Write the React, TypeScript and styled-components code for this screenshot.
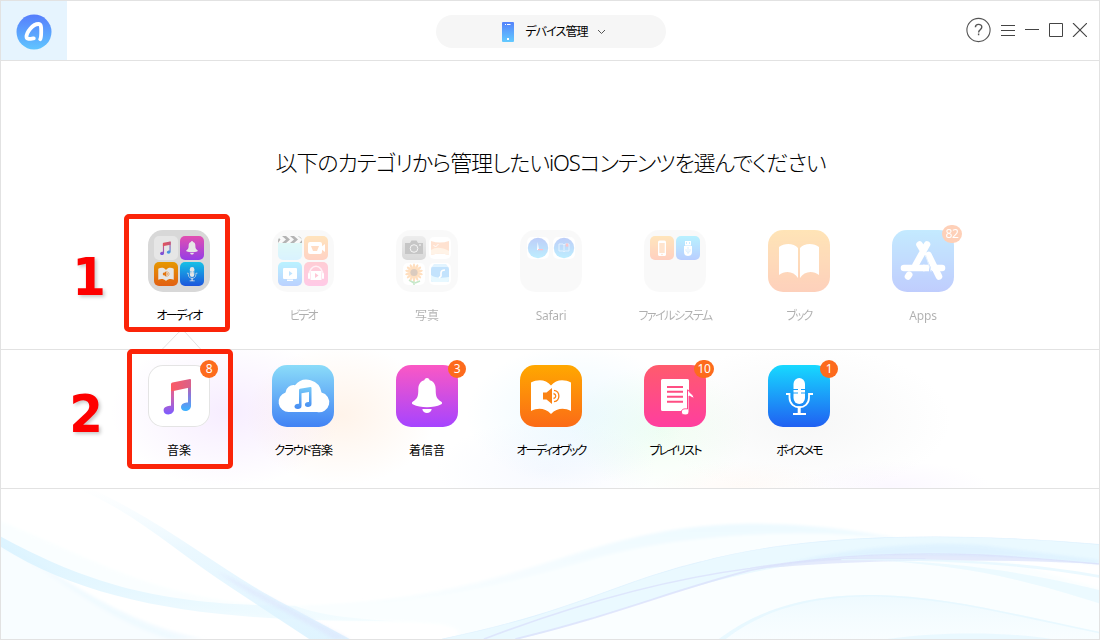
import React from "react";
import styled, { createGlobalStyle } from "styled-components";

const Global = createGlobalStyle`
  * { box-sizing: border-box; }
  body { margin: 0; background: #fff; font-family: "Noto Sans", "Noto Sans CJK JP", sans-serif; }
  svg { display: block; }
`;

const Window = styled.main`
  position: relative;
  width: 1100px;
  height: 640px;
  border: 1px solid #e2e2e2;
  background: #fff;
  display: flex;
  flex-direction: column;
  overflow: hidden;
`;

const Header = styled.header`
  height: 60px;
  flex: none;
  display: grid;
  grid-template-columns: 1fr 230px 1fr;
  border-bottom: 1px solid #e2e2e2;
`;

const LogoBox = styled.div`
  width: 66px;
  height: 59px;
  background: #e6f4fe;
  display: flex;
  align-items: center;
  justify-content: center;
  padding-top: 3px;
`;

const DevicePill = styled.button`
  width: 230px;
  height: 33px;
  margin: 14px 0 0 1px;
  padding: 0 0 0 66px;
  border: 0;
  border-radius: 17px;
  background: #f6f6f6;
  display: flex;
  align-items: center;
  font-family: inherit;
`;

const DeviceName = styled.span`
  width: 63px;
  margin: 0 9px 0 11px;
  font-size: 12px;
  line-height: 16px;
  letter-spacing: -0.85px;
  font-feature-settings: "palt";
  white-space: nowrap;
  color: #000;
`;

const Controls = styled.nav`
  display: flex;
  align-items: center;
  justify-content: flex-end;
  padding: 0 12px 1px 0;
  gap: 9px;
`;

const Upper = styled.section`
  height: 289px;
  flex: none;
  display: flex;
  flex-direction: column;
  border-bottom: 1px solid #e2e2e2;
`;

const Title = styled.h1`
  margin: 83px 0 0 1px;
  height: 36px;
  font-size: 22px;
  line-height: 36px;
  font-weight: 300;
  letter-spacing: -1.1px;
  font-feature-settings: "palt";
  text-align: center;
  white-space: nowrap;
  color: #000;
`;

const Row = styled.div<{ $top: number }>`
  display: flex;
  padding: ${(p) => p.$top}px 0 0 116px;
`;

const Item = styled.div<{ $faded?: boolean }>`
  width: 124px;
  flex: none;
  display: flex;
  flex-direction: column;
  align-items: center;
  opacity: ${(p) => (p.$faded ? 0.31 : 1)};
`;

const Holder = styled.div`
  position: relative;
  width: 62px;
  height: 62px;
`;

const Tile = styled.div<{ $from: string; $to: string; $outline?: boolean }>`
  width: 62px;
  height: 62px;
  border-radius: 15px;
  background: linear-gradient(${(p) => p.$from}, ${(p) => p.$to});
  box-shadow: ${(p) => (p.$outline ? "inset 0 0 0 1px #e4e4e4" : "none")};
`;

const Folder = styled.div<{ $active?: boolean }>`
  width: 62px;
  height: 62px;
  padding: 6px;
  border-radius: 15px;
  background: ${(p) => (p.$active ? "#f0f0f0" : "#eeeeee")};
  filter: ${(p) => (p.$active ? "brightness(0.9)" : "none")};
  display: grid;
  grid-template-columns: 24px 24px;
  grid-auto-rows: 24px;
  gap: 2px;
`;

const Mini = styled.div<{ $from: string; $to: string; $inset?: boolean }>`
  width: ${(p) => (p.$inset ? 22 : 24)}px;
  height: ${(p) => (p.$inset ? 22 : 24)}px;
  margin: ${(p) => (p.$inset ? 1 : 0)}px;
  border-radius: 5px;
  overflow: hidden;
  background: linear-gradient(${(p) => p.$from}, ${(p) => p.$to});
`;

const Badge = styled.span<{ $wide?: boolean }>`
  position: absolute;
  top: -5px;
  left: ${(p) => (p.$wide ? 50 : 52)}px;
  width: ${(p) => (p.$wide ? 20 : 18)}px;
  height: 18px;
  border-radius: 9px;
  background: #fd6b1d;
  color: #fff;
  font-size: 12px;
  line-height: 17px;
  letter-spacing: -0.3px;
  text-align: center;
`;

const Label = styled.span<{ $track?: number }>`
  margin-top: 15px;
  height: 18px;
  font-size: 12px;
  line-height: 18px;
  letter-spacing: ${(p) => p.$track ?? 0}px;
  font-feature-settings: "palt";
  white-space: nowrap;
  color: #000;
`;

const Detail = styled.section`
  position: relative;
  height: 139px;
  flex: none;
  border-bottom: 1px solid #e2e2e2;
  background:
    radial-gradient(ellipse 115px 75px at 225px 62px, rgba(226, 190, 255, 0.28), transparent),
    radial-gradient(ellipse 95px 70px at 340px 65px, rgba(255, 214, 180, 0.28), transparent),
    radial-gradient(ellipse 110px 70px at 575px 65px, rgba(178, 230, 255, 0.24), transparent),
    radial-gradient(ellipse 110px 50px at 545px 120px, rgba(200, 215, 255, 0.15), transparent),
    radial-gradient(ellipse 90px 65px at 660px 80px, rgba(200, 255, 205, 0.24), transparent),
    radial-gradient(ellipse 150px 75px at 800px 70px, rgba(200, 205, 205, 0.16), transparent),
    radial-gradient(ellipse 90px 25px at 740px 136px, rgba(255, 225, 205, 0.15), transparent),
    radial-gradient(ellipse 100px 25px at 890px 136px, rgba(230, 205, 255, 0.14), transparent),
    #fff;
`;

const Pointer = styled.svg`
  position: absolute;
  left: 160px;
  top: -20px;
`;

const Footer = styled.footer`
  flex: 1;
  min-height: 0;
`;

const Frame = styled.div<{ $x: number; $y: number; $w: number; $h: number }>`
  position: absolute;
  left: ${(p) => p.$x}px;
  top: ${(p) => p.$y}px;
  width: ${(p) => p.$w}px;
  height: ${(p) => p.$h}px;
  border: 5.5px solid #fb2409;
  border-radius: 5px;
`;

const Step = styled.span<{ $x: number; $y: number }>`
  position: absolute;
  left: ${(p) => p.$x}px;
  top: ${(p) => p.$y}px;
  font-family: "DejaVu Sans", sans-serif;
  font-size: 52px;
  line-height: 60px;
  font-weight: 700;
  color: #fe0000;
  transform: scaleX(0.93);
  -webkit-text-stroke: 2px #fff;
  paint-order: stroke fill;
  text-shadow: 2px 2px 4px rgba(0, 0, 0, 0.22);
`;

const Glyph = ({ size = 62, children }: { size?: number; children: React.ReactNode }) => (
  <svg width={size} height={size} viewBox="0 0 62 62" fill="#fff">
    {children}
  </svg>
);

const Defs = () => (
  <defs>
    <linearGradient id="noteL" x1="0" y1="16" x2="0" y2="49" gradientUnits="userSpaceOnUse">
      <stop offset="0" stopColor="#fb5a63" />
      <stop offset=".45" stopColor="#d261a8" />
      <stop offset="1" stopColor="#7d5cff" />
    </linearGradient>
    <linearGradient id="noteR" x1="0" y1="14" x2="0" y2="45" gradientUnits="userSpaceOnUse">
      <stop offset="0" stopColor="#f05c72" />
      <stop offset=".5" stopColor="#8c74d8" />
      <stop offset="1" stopColor="#3fb0ff" />
    </linearGradient>
    <linearGradient id="beam" x1="23" y1="0" x2="43" y2="0" gradientUnits="userSpaceOnUse">
      <stop offset="0" stopColor="#fc5a64" />
      <stop offset="1" stopColor="#d9608a" />
    </linearGradient>
    <linearGradient id="cloudNote" x1="0" y1="20" x2="0" y2="45" gradientUnits="userSpaceOnUse">
      <stop offset="0" stopColor="#7cd0f8" />
      <stop offset="1" stopColor="#4388f2" />
    </linearGradient>
  </defs>
);

const MusicArt = () => (
  <>
    <Defs />
    <path fill="url(#noteR)" d="M40 15h3v26c0 3-3 5-5.600 5-2.500 0-4.400-1.500-4.400-3.800 0-3.800 4-4.800 7-4.800z" />
    <path fill="url(#noteL)" d="M23 19h3v25.500c0 3-3 4.900-5.600 4.900-2.700 0-4.800-1.600-4.800-4 0-3.800 4.400-4.600 7.400-4.600z" />
    <path fill="url(#beam)" d="M24.500 17.500 42 14q1-.1 1 1v7.300L25.500 26H23v-6.700q0-1.500 1.500-1.800z" />
  </>
);
const BellArt = () => (
  <path d="M31 13c1.600 0 2.500 1 2.700 2.300 4.400 1.200 6 4.800 6 9.300 0 6.500.7 9.200 5.300 12 1.600 1 1.400 2.400-.2 3C38 43.200 24 43.200 17.200 39.600c-1.600-.6-1.800-2-.2-3 4.600-2.800 5.300-5.500 5.300-12 0-4.500 1.600-8.100 6-9.300C28.500 14 29.400 13 31 13zM26.300 44h9.400c-.6 5.300-8.800 5.300-9.400 0z" />
);
const AudioBookArt = ({ accent = "#fb8314" }: { accent?: string }) => (
  <>
    <path d="M11 17.500C17.500 14 26 14 31 20.500 36 14 44.500 14 51 17.500V46c-7-3.500-14-3-20 3-6-6-13-6.500-20-3z" />
    <path fill={accent} d="M23 27.500h3.500L32 23v16l-5.500-4.500H23z" />
    <path fill="none" stroke={accent} strokeWidth="1.300" d="M33.500 28.500c3 .8 3 4.200 0 5M34 25.300c6.500 1 6.500 10.400 0 11.400" />
  </>
);
const MicArt = () => (
  <>
    <path d="M25.500 19a5.700 5.900 0 0 1 11.500 0v14a5.700 5.900 0 0 1-11.500 0z" />
    <path fill="none" stroke="#1b9ffb" d="M25 24.500h5m3 0h5M25 28h5m3 0h5" />
    <path fill="none" stroke="#fff" strokeWidth="1.800" d="M18 29h3.500v3.500c0 13 19.500 13 19.500 0V29h4" />
    <path d="M29.700 41.500h3V48H38v2H25v-2h4.700z" />
  </>
);
const CloudArt = () => (
  <>
    <Defs />
    <path d="M17 47a10 10 0 0 1-3.500-19.500A8 8 0 0 1 23 20.200 15 15 0 0 1 49.500 27.500 10 10 0 0 1 45 47z" />
    <path fill="url(#cloudNote)" d="M27 25q0-1 1-1.200L38.500 22q1-.1 1 1v16c0 2.200-1.700 3-3.500 3-4.500 0-4-5.500 1-5V27l-7.500 1.300V41c0 2.200-1.800 3-3.600 3-5 0-4.400-5.700 1.100-5.200z" />
  </>
);
const PlaylistArt = () => (
  <>
    <path d="M18.500 14h25q1.500 0 1.500 1.500V26l-1.500-2v20L39 46H18.500Q17 46 17 44.500v-29Q17 14 18.500 14z" />
    <path fill="none" stroke="#ff4d83" strokeWidth="1.900" d="M23 22h16M23 26.700h16M23 31.700h16M23 36.700h16" />
    <path stroke="#ff468c" strokeWidth="1" d="M43.500 25q1 0 1.500 1c1 3 5 3 5 7.500l-5-2.500v16c0 4-7.700 4-7.700 0 0-3 3.700-3.600 6.200-3z" />
  </>
);
const BookArt = () => (
  <path d="M11 17c5-4 15-4 19 1v30c-4-7-13-8-19-3zM51 17c-5-4-15-4-19 1v30c4-7 13-8 19-3z" />
);
const AppsArt = () => (
  <g fill="none" stroke="#fff" strokeWidth="6.600" strokeLinecap="round">
    <path d="M35 14.500 23.500 35M27.500 14.500l3 5M36.500 25 47 46.500M16 46.500l1.200-1.800" />
    <path d="M12 38h20M42 38h8" />
    <path d="M31 38h6" strokeLinecap="butt" />
    <path stroke="#acd3fd" strokeWidth="1" d="M33.700 25.500 39 41.300" />
  </g>
);

const VideoFolder = () => (
  <Folder>
    <Mini $from="#a5f8df" $to="#88d8ff">
      <svg width="24" height="24"><path fill="#eee" d="M0 0h24v7H0z" /><path fill="#111" d="M0 1l2.500 2.500L0 7zM4 0h4l4 3.500L8 7H4l4-3.500zm8 0h4l4 3.500L16 7h-4l4-3.500zM20 0h4v3.500zM24 4v3h-2.500z" /></svg>
    </Mini>
    <Mini $from="#ffa92d" $to="#ff7043">
      <svg width="24" height="24" fill="#fff"><rect x="4" y="6" width="14" height="12" rx="2" /><path d="m17 11 4-3v8l-4-3z" /><path fill="#ff9140" d="M7 10h8l-2 5H9z" /></svg>
    </Mini>
    <Mini $from="#25d7ff" $to="#266eff">
      <svg width="24" height="24" fill="#fff"><rect x="5" y="6" width="14" height="11" rx="1" /><path d="M9 17.500h6V19H9z" /><path fill="#38aaff" d="m11 9 3.500 2.500L11 14z" /></svg>
    </Mini>
    <Mini $from="#ff6278" $to="#ff57b2">
      <svg width="24" height="24" fill="#fff"><path fill="none" stroke="#ffd0df" strokeWidth="1.500" d="M5 14C5 1 19 1 19 14" /><rect x="6.500" y="9" width="11" height="9" /><rect x="4" y="11" width="2" height="6" rx="1" /><rect x="18" y="11" width="2" height="6" rx="1" /><path fill="#ff4c7d" d="m11 11 3.500 2.500L11 16z" /></svg>
    </Mini>
  </Folder>
);

const petals = Array.from({ length: 14 }, (_, i) => (i * 360) / 14);

const PhotoFolder = () => (
  <Folder>
    <Mini $from="#c9c9c9" $to="#858585">
      <svg width="24" height="24"><path fill="#4a4a4a" d="M3 7h5l1.500-2.500h5L16 7h5v11H3z" /><circle cx="12" cy="12.500" r="3.800" fill="#555" stroke="#ddd" strokeWidth="1" /><circle cx="18" cy="9" r="1" fill="#bbb" /></svg>
    </Mini>
    <Mini $inset $from="#fff" $to="#fff">
      <svg width="22" height="22"><path fill="#ffa56c" d="M2 4q9 3 18 0v14q-9-3-18 0z" /><path fill="#ffd9b4" d="M2 13q7-5 18 1v4q-9-3-18 0z" /><path fill="none" stroke="#fff" d="m4.500 8 2 2 3-3" /></svg>
    </Mini>
    <Mini $inset $from="#fff" $to="#fff">
      <svg width="22" height="22">
        <path fill="none" stroke="#49b653" strokeWidth="1.500" d="M11 14v8M11 20l-5-3M12 20l5-2" />
        {petals.map((a) => <ellipse key={a} cx="11" cy="5" rx="1.300" ry="4.500" fill="#ff9b36" transform={`rotate(${a} 11 9.500)`} />)}
        <circle cx="11" cy="9.500" r="3.600" fill="#8e5b35" />
      </svg>
    </Mini>
    <Mini $inset $from="#fff" $to="#fff">
      <svg width="22" height="22"><path fill="#a4dcff" d="M5 1h12l3 4H2z" /><rect x="2" y="4" width="18" height="15" rx="2" fill="#3fa6fa" /><path fill="#b4eaff" d="M2 12q5 4 18 2v3q0 2-2 2H4q-2 0-2-2z" /><path fill="none" stroke="#fff" strokeWidth="1.700" d="M16 7q-4 0-4 3v3l-2 2" /></svg>
    </Mini>
  </Folder>
);

const SafariFolder = () => (
  <Folder>
    <Mini $inset $from="#fff" $to="#fff">
      <svg width="22" height="22"><defs><linearGradient id="disc" x1="0" y1="0" x2="0" y2="1"><stop stopColor="#2f62ea" /><stop offset="1" stopColor="#2cc8ff" /></linearGradient></defs><circle cx="11" cy="11" r="10.200" fill="url(#disc)" /><path fill="#fff" d="m10 13 .7-8 1.300 8z" /><path fill="#f35" d="M11 12h5v1.300h-5z" /></svg>
    </Mini>
    <Mini $inset $from="#fff" $to="#fff">
      <svg width="22" height="22"><circle cx="11" cy="11" r="10.200" fill="url(#disc)" /><path fill="none" stroke="#b5dcff" strokeWidth=".9" d="M6 7h4l1 1 1-1h4v7h-4l-1 1-1-1H6zM11 8v6" /><path fill="#f54452" d="M12.800 6.500h2.500V10l-1.200-.8-1.300.8z" /></svg>
    </Mini>
  </Folder>
);

const FilesFolder = () => (
  <Folder>
    <Mini $from="#ffae2a" $to="#ff6a38">
      <svg width="24" height="24"><rect x="8" y="4.500" width="8" height="15.500" rx="1.500" fill="#fff" /><path fill="#ffa963" d="M9.300 7h5.400v10H9.300z" /><circle cx="12" cy="18.500" r=".7" fill="#ff8b40" /></svg>
    </Mini>
    <Mini $from="#1dd4ff" $to="#2163ff">
      <svg width="24" height="24" fill="#fff"><path d="M9 5h6v4.500H9zM8 10h8v6q0 4-4 4t-4-4z" /><path fill="none" stroke="#7fc4ff" strokeWidth=".8" d="M12 11v7M10 13v2l2 1.500 2-1V13" /><path stroke="#2bb0ff" strokeWidth=".8" d="M10.500 6v2m3-2v2" /></svg>
    </Mini>
  </Folder>
);

const AudioFolder = () => (
  <Folder $active>
    <Mini $from="#fff" $to="#fff"><Glyph size={24}><MusicArt /></Glyph></Mini>
    <Mini $from="#fb58c4" $to="#a644ff"><Glyph size={24}><BellArt /></Glyph></Mini>
    <Mini $from="#ffa800" $to="#fb6b17"><Glyph size={24}><AudioBookArt /></Glyph></Mini>
    <Mini $from="#17d6ff" $to="#205ff5"><Glyph size={24}><MicArt /></Glyph></Mini>
  </Folder>
);

type Entry = {
  label: string;
  track?: number;
  badge?: string;
  icon: React.ReactNode;
};

const categories: Entry[] = [
  { label: "オーディオ", track: -1.7, icon: <AudioFolder /> },
  { label: "ビデオ", track: -2.2, icon: <VideoFolder /> },
  { label: "写真", icon: <PhotoFolder /> },
  { label: "Safari", track: -0.3, icon: <SafariFolder /> },
  { label: "ファイルシステム", track: -1.5, icon: <FilesFolder /> },
  { label: "ブック", track: -1.8, icon: <Tile $from="#ffaa18" $to="#fb6a28"><Glyph><BookArt /></Glyph></Tile> },
  { label: "Apps", track: -0.2, badge: "82", icon: <Tile $from="#43bdff" $to="#3560fb"><Glyph><AppsArt /></Glyph></Tile> },
];

const audio: Entry[] = [
  { label: "音楽", badge: "8", icon: <Tile $outline $from="#fff" $to="#fff"><Glyph><MusicArt /></Glyph></Tile> },
  { label: "クラウド音楽", track: -1.4, icon: <Tile $from="#8bdcf9" $to="#4182f4"><Glyph><CloudArt /></Glyph></Tile> },
  { label: "着信音", badge: "3", icon: <Tile $from="#fb58c4" $to="#a644ff"><Glyph><BellArt /></Glyph></Tile> },
  { label: "オーディオブック", track: -1.9, icon: <Tile $from="#ffa800" $to="#fb6b17"><Glyph><AudioBookArt /></Glyph></Tile> },
  { label: "プレイリスト", track: -1.8, badge: "10", icon: <Tile $from="#ff5b6d" $to="#ff3e9f"><Glyph><PlaylistArt /></Glyph></Tile> },
  { label: "ボイスメモ", track: -1.8, badge: "1", icon: <Tile $from="#17d9ff" $to="#2060f2"><Glyph><MicArt /></Glyph></Tile> },
];

const Entries = ({ items, fade }: { items: Entry[]; fade?: boolean }) => (
  <>
    {items.map((e, i) => (
      <Item key={e.label} $faded={fade && i > 0}>
        <Holder>
          {e.icon}
          {e.badge && <Badge $wide={e.badge.length > 1}>{e.badge}</Badge>}
        </Holder>
        <Label $track={e.track}>{e.label}</Label>
      </Item>
    ))}
  </>
);

const Waves = () => (
  <svg width="100%" height="150" viewBox="0 12 1568 450" preserveAspectRatio="none">
    <defs>
      <filter id="soft" x="-5%" y="-10%" width="110%" height="120%">
        <feGaussianBlur stdDeviation="3 5" />
      </filter>
      <linearGradient id="wFade" x1="0" y1="0" x2="0" y2="1">
        <stop offset="0" stopColor="#e6f7ff" stopOpacity="0" />
        <stop offset=".4" stopColor="#e2f5ff" stopOpacity=".7" />
        <stop offset="1" stopColor="#dcf3ff" stopOpacity=".9" />
      </linearGradient>
      <linearGradient id="wSide" x1="0" y1="0" x2="1" y2="0">
        <stop offset="0" stopColor="#d8f2ff" stopOpacity=".85" />
        <stop offset="1" stopColor="#e6f9ff" stopOpacity=".3" />
      </linearGradient>
      <linearGradient id="wHump" x1="0" y1="0" x2="0" y2="1">
        <stop offset="0" stopColor="#e8f8ff" stopOpacity=".7" />
        <stop offset="1" stopColor="#f4fcff" stopOpacity=".3" />
      </linearGradient>
    </defs>
    <g filter="url(#soft)">
      <path fill="#fafeff" d="M-20 90C150 240 240 360 420 362 760 350 830 116 1080 116 1200 120 1290 165 1400 205L1600 330V490H630Q700 410 560 410C420 405 200 390 -20 185z" />
      <path fill="#f8fdff" d="M-20 180C110 290 160 400 290 480H-20z" />
      <path fill="#e3f6ff" opacity=".4" d="M0 175C80 250 150 400 290 462H240C140 400 80 260 0 190z" />
      <path fill="url(#wHump)" d="M440 362C760 330 830 116 1080 116 1160 117 1220 135 1290 163 1130 125 960 150 840 225 700 310 620 350 440 366z" />
    </g>
    <path fill="url(#wSide)" d="M0 155C120 290 220 362 420 362 450 385 480 398 560 408 320 410 140 370 0 186z" />
    <path fill="url(#wFade)" d="M110 12 130 12C240 120 330 280 410 362L498 462H440L330 310C250 200 190 80 110 12z" />
    <path fill="#dbe0fc" opacity=".45" filter="url(#soft)" d="M310 260C350 300 400 355 498 462H475C420 390 350 330 310 260z" />
    <path fill="#e6f8ff" opacity=".85" d="M630 462C820 380 880 290 1000 230 1150 145 1360 140 1568 178V237C1400 205 1220 200 1130 240 980 290 880 390 740 462z" />
    <path fill="#d9efff" opacity=".6" filter="url(#soft)" d="M1120 235C1190 200 1300 165 1400 180L1568 225V237C1400 203 1240 205 1120 235z" />
    <path fill="none" stroke="#d8eefe" strokeWidth="2" opacity=".7" d="M630 462C820 380 880 290 1000 230 1150 145 1360 140 1568 178" />
    <path fill="none" stroke="#dadffb" strokeWidth="4" opacity=".75" d="M690 462C830 350 960 280 1070 250 1190 210 1290 200 1400 210Q1490 220 1568 237" />
    <path fill="none" stroke="#dadffb" strokeWidth="5" opacity=".75" d="M735 462C870 395 960 315 1070 256 1170 210 1260 222 1320 222" />
    <path fill="#dce3fb" opacity=".75" d="M1080 252C1200 208 1290 205 1380 210 1440 214 1500 224 1568 237 1420 220 1220 222 1080 252z" />
    <path fill="#e6f8ff" opacity=".8" d="M1200 222C1350 218 1460 230 1568 270V278C1460 238 1340 224 1200 226z" />
    <path fill="#e6f8ff" opacity=".7" d="M1240 225C1370 230 1470 265 1568 315V355C1450 275 1370 240 1240 225z" />
    <path fill="url(#wHump)" d="M1025 462C1100 350 1170 330 1250 330 1360 335 1470 400 1568 440V462z" />
    <path fill="#e2f6ff" opacity=".7" d="M1025 462C1100 345 1180 329 1250 330 1360 335 1470 400 1568 440V445C1450 395 1360 342 1250 334 1180 334 1100 355 1035 462z" />
    <path fill="#e4f7ff" opacity=".7" d="M1265 462C1350 438 1440 442 1500 462z" />
  </svg>
);

export default function App() {
  return (
    <>
      <Global />
      <Window>
        <Header>
          <LogoBox>
            <svg width="36" height="36" viewBox="0 0 36 36">
              <defs>
                <linearGradient id="logo" x1="0" y1="0" x2="0" y2="1">
                  <stop stopColor="#567dfc" />
                  <stop offset="1" stopColor="#60c5ff" />
                </linearGradient>
              </defs>
              <circle cx="18" cy="18" r="17.500" fill="url(#logo)" />
              <path fill="none" stroke="#fff" strokeWidth="3.800" strokeLinecap="round" strokeLinejoin="round" d="M17.800 24.300C14 25 10.500 25.800 10.500 22.800 10.500 18.500 16.500 10 22.500 10 25.500 10 25.200 14.500 25.200 18 25.200 21 25.100 23.800 24.200 25.200" />
            </svg>
          </LogoBox>
          <DevicePill>
            <svg width="12" height="20" viewBox="0 0 12 20">
              <defs>
                <linearGradient id="phone" x1="0" y1="0" x2="0" y2="1">
                  <stop stopColor="#5583fb" />
                  <stop offset="1" stopColor="#63caff" />
                </linearGradient>
              </defs>
              <rect width="12" height="20" rx="1" fill="url(#phone)" />
              <path fill="#fff" d="M3 2h1v1H3zM5 2h3.500v1H5zM5 16h2v2H5z" />
            </svg>
            <DeviceName>デバイス管理</DeviceName>
            <svg width="9" height="6" viewBox="0 0 9 6" fill="none" stroke="#555"><path d="M1 1l3.500 3.500L8 1" /></svg>
          </DevicePill>
          <Controls>
            <svg width="26" height="26" viewBox="0 0 26 26" fill="none" stroke="#555" strokeWidth="1.100">
              <circle cx="12.500" cy="13" r="11.600" />
              <path strokeWidth="1.400" d="M9.400 10.300C9.400 6.500 15.800 6.500 15.800 10c0 2.700-3.200 2.800-3.200 5.500M12.600 16.500v1.800" />
            </svg>
            <svg width="15" height="14" viewBox="0 0 15 14" stroke="#444"><path d="M0 2.500h14M0 7.500h14M0 12.500h14" /></svg>
            <svg width="14" height="14" viewBox="0 0 14 14" stroke="#444"><path d="M0 6.500h14" /></svg>
            <svg width="15" height="14" viewBox="0 0 15 14" fill="none" stroke="#444"><path d="M1.500.5h13v13h-13z" /></svg>
            <svg width="15" height="14" viewBox="0 0 15 14" stroke="#444" strokeWidth="1.100"><path d="m1 0 14 14M15 0 1 14" /></svg>
          </Controls>
        </Header>
        <Upper>
          <Title>以下のカテゴリから管理したいiOSコンテンツを選んでください</Title>
          <Row $top={50}>
            <Entries items={categories} fade />
          </Row>
        </Upper>
        <Detail>
          <Pointer width="42" height="21" viewBox="0 0 42 21">
            <path fill="#fff" stroke="#e2e2e2" d="M1 19.500 18 2q3-2.500 6 0l16 17.500" />
            <path stroke="#fff" strokeWidth="1.500" d="M2.500 19.700h36" />
          </Pointer>
          <Row $top={15}>
            <Entries items={audio} />
          </Row>
        </Detail>
        <Footer>
          <Waves />
        </Footer>
        <Frame $x={123} $y={213} $w={106} $h={118} />
        <Frame $x={126} $y={348} $w={106} $h={120} />
        <Step $x={70} $y={246}>1</Step>
        <Step $x={67} $y={383}>2</Step>
      </Window>
    </>
  );
}
